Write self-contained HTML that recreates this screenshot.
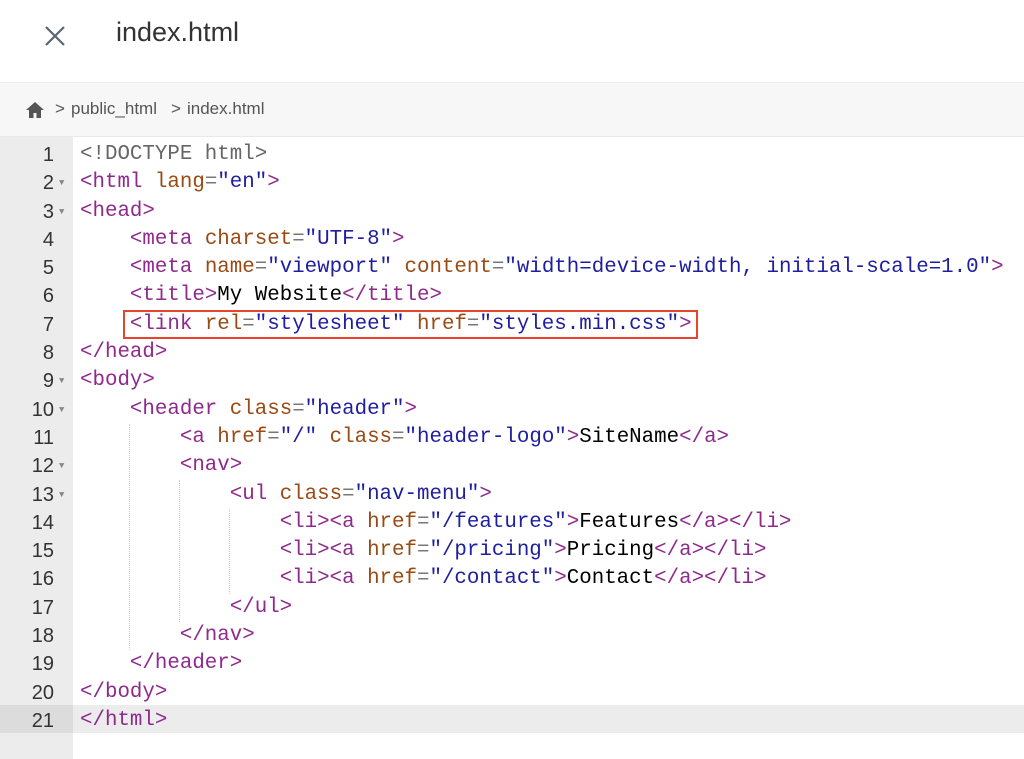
<!DOCTYPE html>
<html><head><style>
body{margin:0;width:1024px;height:759px;overflow:hidden;background:#fff;font-family:"Liberation Sans",sans-serif;position:relative}
.top{position:absolute;left:0;top:0;width:1024px;height:82px;background:#fff}
.title{position:absolute;left:116px;top:17px;font-size:27px;color:#333}
.crumb{position:absolute;left:0;top:82px;width:1024px;height:55px;background:#f7f7f7;border-top:1px solid #eee;border-bottom:1px solid #e8e8e8;box-sizing:border-box}
.crumb span{position:absolute;top:16px;font-size:17px;color:#555}
.gutter{position:absolute;left:0;top:137px;width:73px;height:622px;background:#ececec}
.code{position:absolute;left:0;top:141px;width:1024px;font-family:"Liberation Mono",monospace;font-size:20.8px}
.ln{height:28.3px;line-height:28.3px;position:relative;white-space:pre}
.ln .n{position:absolute;right:970px;color:#333;font-family:"Liberation Sans",sans-serif;font-size:20px}
.ln .f{position:absolute;left:59px;top:0;color:#888;font-size:9px}
.ln .c{position:absolute;left:80px}
.t{color:#8f2a8d}.a{color:#9a4a12}.s{color:#1e1ea0}.e{color:#777}.d{color:#666}
.g{position:absolute;border-left:1px dotted #ccc}
</style></head><body>
<div class="top">
<svg style="position:absolute;left:44px;top:25px" width="22" height="22" viewBox="0 0 22 22"><path d="M2 2L20 20M20 2L2 20" stroke="#5a6670" stroke-width="2.2" fill="none"/></svg>
<div class="title">index.html</div>
</div>
<div class="crumb">
<svg style="position:absolute;left:25px;top:18px" width="20" height="18" viewBox="0 0 20 18"><path d="M10 1L1 9h3v8h4.5v-5h3v5H16V9h3z" fill="#555"/></svg>
<span style="left:55px">&gt;</span><span style="left:71px">public_html</span><span style="left:171px">&gt;</span><span style="left:187px">index.html</span>
</div>
<div class="gutter"></div>
<div style="position:absolute;left:0;top:705px;width:1024px;height:28px;background:#ececec"></div>
<div style="position:absolute;left:0;top:705px;width:73px;height:28px;background:#dcdcdc"></div>
<div class="g" style="left:129px;top:424px;height:226px"></div>
<div class="g" style="left:179px;top:480px;height:142px"></div>
<div class="g" style="left:229px;top:509px;height:85px"></div>
<div class="code">
<div class="ln"><span class="n">1</span><span class="c"><span class="d">&lt;!DOCTYPE html&gt;</span></span></div>
<div class="ln"><span class="n">2</span><span class="f">▼</span><span class="c"><span class="t">&lt;html</span> <span class="a">lang</span><span class="e">=</span><span class="s">"en"</span><span class="t">&gt;</span></span></div>
<div class="ln"><span class="n">3</span><span class="f">▼</span><span class="c"><span class="t">&lt;head&gt;</span></span></div>
<div class="ln"><span class="n">4</span><span class="c">    <span class="t">&lt;meta</span> <span class="a">charset</span><span class="e">=</span><span class="s">"UTF-8"</span><span class="t">&gt;</span></span></div>
<div class="ln"><span class="n">5</span><span class="c">    <span class="t">&lt;meta</span> <span class="a">name</span><span class="e">=</span><span class="s">"viewport"</span> <span class="a">content</span><span class="e">=</span><span class="s">"width=device-width, initial-scale=1.0"</span><span class="t">&gt;</span></span></div>
<div class="ln"><span class="n">6</span><span class="c">    <span class="t">&lt;title&gt;</span>My Website<span class="t">&lt;/title&gt;</span></span></div>
<div class="ln"><span class="n">7</span><span class="c">    <span class="t">&lt;link</span> <span class="a">rel</span><span class="e">=</span><span class="s">"stylesheet"</span> <span class="a">href</span><span class="e">=</span><span class="s">"styles.min.css"</span><span class="t">&gt;</span></span></div>
<div class="ln"><span class="n">8</span><span class="c"><span class="t">&lt;/head&gt;</span></span></div>
<div class="ln"><span class="n">9</span><span class="f">▼</span><span class="c"><span class="t">&lt;body&gt;</span></span></div>
<div class="ln"><span class="n">10</span><span class="f">▼</span><span class="c">    <span class="t">&lt;header</span> <span class="a">class</span><span class="e">=</span><span class="s">"header"</span><span class="t">&gt;</span></span></div>
<div class="ln"><span class="n">11</span><span class="c">        <span class="t">&lt;a</span> <span class="a">href</span><span class="e">=</span><span class="s">"/"</span> <span class="a">class</span><span class="e">=</span><span class="s">"header-logo"</span><span class="t">&gt;</span>SiteName<span class="t">&lt;/a&gt;</span></span></div>
<div class="ln"><span class="n">12</span><span class="f">▼</span><span class="c">        <span class="t">&lt;nav&gt;</span></span></div>
<div class="ln"><span class="n">13</span><span class="f">▼</span><span class="c">            <span class="t">&lt;ul</span> <span class="a">class</span><span class="e">=</span><span class="s">"nav-menu"</span><span class="t">&gt;</span></span></div>
<div class="ln"><span class="n">14</span><span class="c">                <span class="t">&lt;li&gt;&lt;a</span> <span class="a">href</span><span class="e">=</span><span class="s">"/features"</span><span class="t">&gt;</span>Features<span class="t">&lt;/a&gt;&lt;/li&gt;</span></span></div>
<div class="ln"><span class="n">15</span><span class="c">                <span class="t">&lt;li&gt;&lt;a</span> <span class="a">href</span><span class="e">=</span><span class="s">"/pricing"</span><span class="t">&gt;</span>Pricing<span class="t">&lt;/a&gt;&lt;/li&gt;</span></span></div>
<div class="ln"><span class="n">16</span><span class="c">                <span class="t">&lt;li&gt;&lt;a</span> <span class="a">href</span><span class="e">=</span><span class="s">"/contact"</span><span class="t">&gt;</span>Contact<span class="t">&lt;/a&gt;&lt;/li&gt;</span></span></div>
<div class="ln"><span class="n">17</span><span class="c">            <span class="t">&lt;/ul&gt;</span></span></div>
<div class="ln"><span class="n">18</span><span class="c">        <span class="t">&lt;/nav&gt;</span></span></div>
<div class="ln"><span class="n">19</span><span class="c">    <span class="t">&lt;/header&gt;</span></span></div>
<div class="ln"><span class="n">20</span><span class="c"><span class="t">&lt;/body&gt;</span></span></div>
<div class="ln"><span class="n">21</span><span class="c"><span class="t">&lt;/html&gt;</span></span></div>
</div>
<div style="position:absolute;left:123px;top:310px;width:571px;height:25px;border:2px solid #e6452c"></div>
</body></html>
